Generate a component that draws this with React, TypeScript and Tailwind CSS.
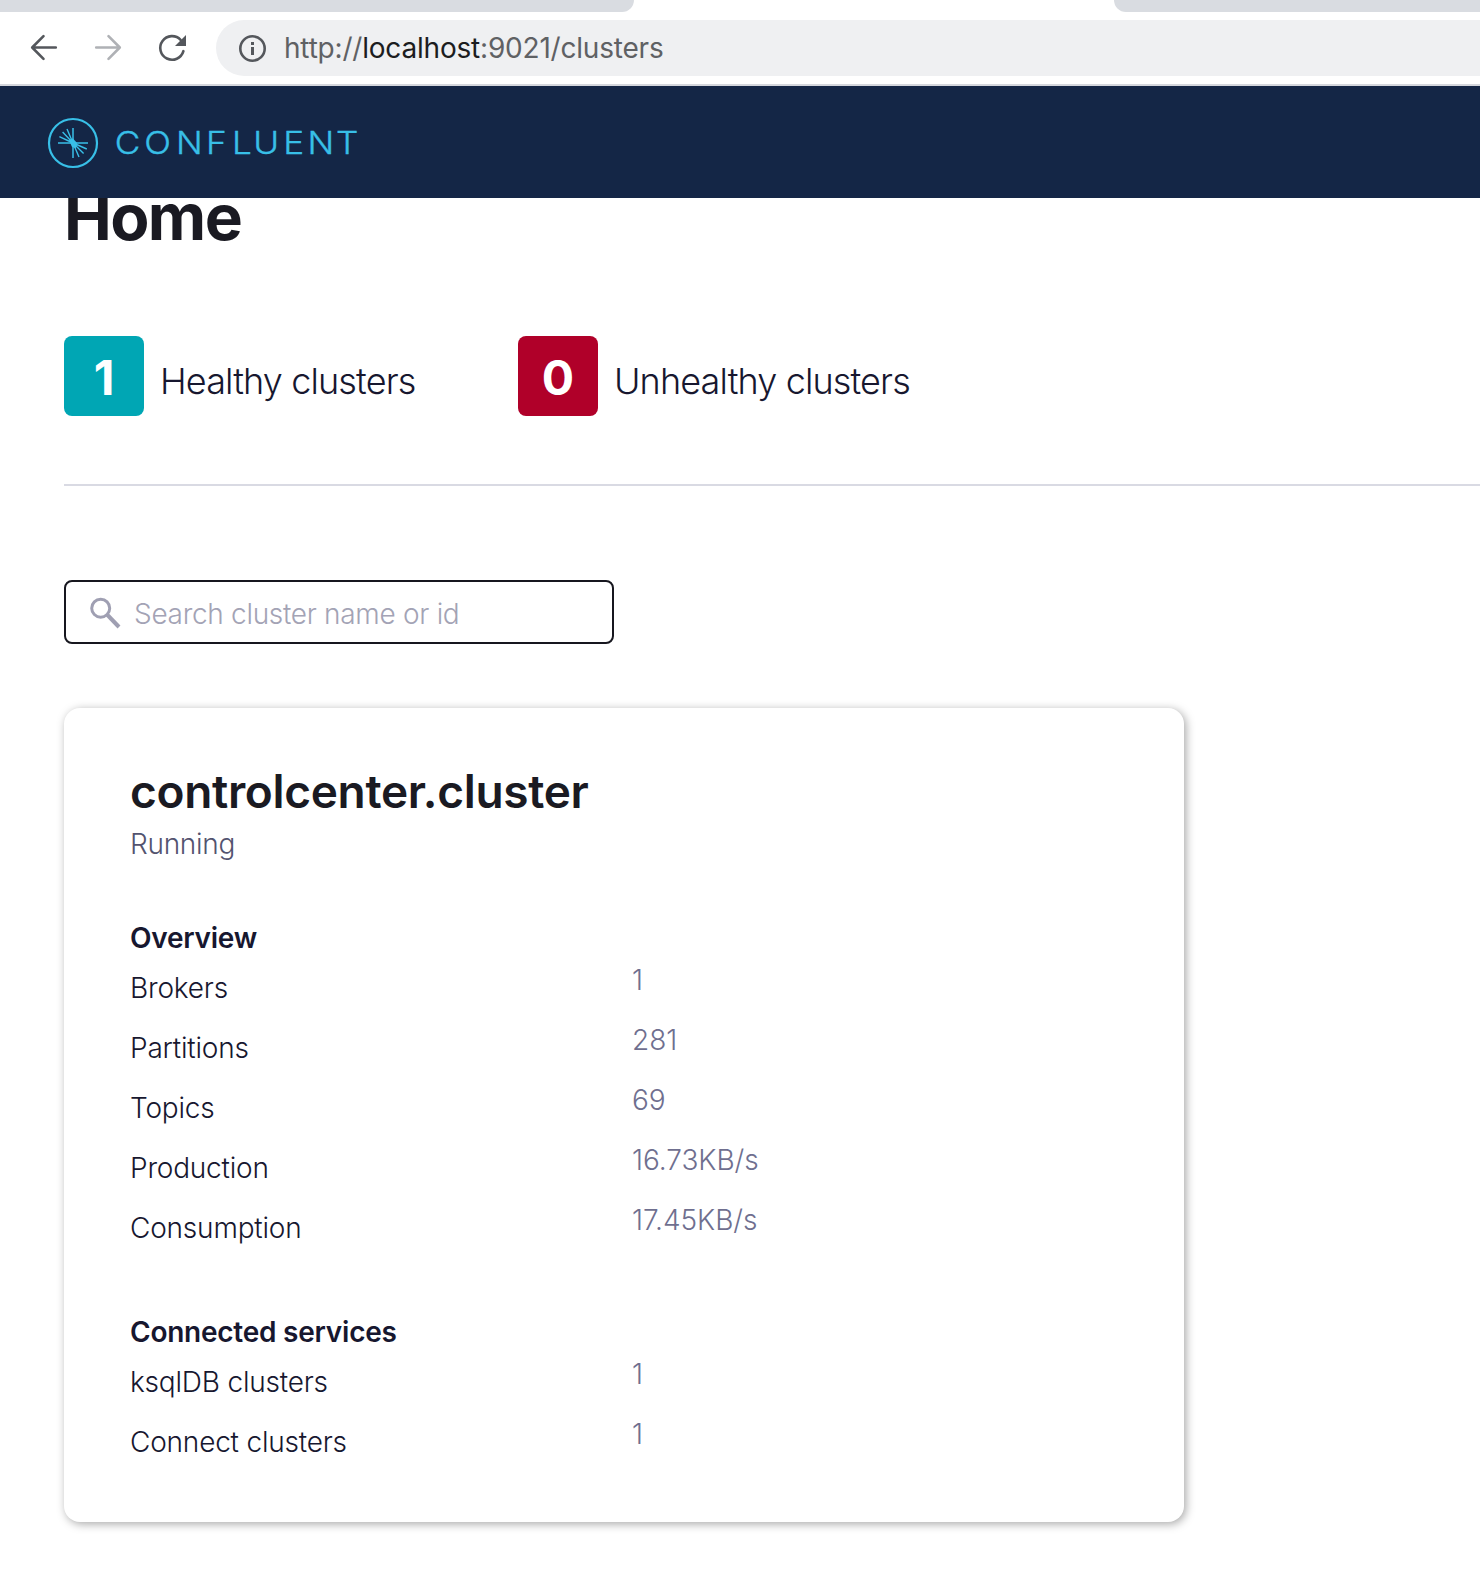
type Row = { label: string; value: string };

const overview: Row[] = [
  { label: "Brokers", value: "1" },
  { label: "Partitions", value: "281" },
  { label: "Topics", value: "69" },
  { label: "Production", value: "16.73KB/s" },
  { label: "Consumption", value: "17.45KB/s" },
];

const services: Row[] = [
  { label: "ksqlDB clusters", value: "1" },
  { label: "Connect clusters", value: "1" },
];

function BrowserBar() {
  return (
    <div className="flex h-[86px] flex-col border-b-2 border-[#d5d7dd] bg-white">
      <div className="flex h-3 justify-between">
        <div className="h-3 w-[634px] rounded-br-[16px] bg-[#d9dce1]" />
        <div className="h-3 w-[366px] rounded-bl-[16px] bg-[#d9dce1]" />
      </div>
      <div className="mt-2 flex h-14 items-center">
        <div className="flex w-[216px] shrink-0 items-center">
          <svg className="ml-6 h-10 w-10" viewBox="0 0 40 40" fill="none" stroke="#54575c" strokeWidth="2.6" strokeLinecap="round" strokeLinejoin="round">
            <path d="M31.8 19.5H8.6M19.5 8.2L8.2 19.5l11.3 11.3" />
          </svg>
          <svg className="ml-6 h-10 w-10" viewBox="0 0 40 40" fill="none" stroke="#afb1b5" strokeWidth="2.6" strokeLinecap="round" strokeLinejoin="round">
            <path d="M8.2 19.5h23.2M20.5 8.2l11.3 11.3-11.3 11.3" />
          </svg>
          <svg className="ml-6 h-10 w-10" viewBox="0 0 40 40" fill="none">
            <path d="M31.4 23.2A11.8 11.8 0 1 1 28.6 11.8" stroke="#54575c" strokeWidth="2.6" strokeLinecap="round" />
            <path d="M34 7v11H23z" fill="#54575c" />
          </svg>
        </div>
        <div className="flex h-14 flex-1 items-center rounded-l-full bg-[#eff0f2]">
          <svg className="ml-[22px] h-7 w-7" viewBox="0 0 28 28" fill="none">
            <circle cx="14.5" cy="14.5" r="12.2" stroke="#54575c" strokeWidth="2.6" />
            <path d="M14.5 8v3M14.5 13v8" stroke="#54575c" strokeWidth="3" />
          </svg>
          <span className="ml-[18px] text-[28px] leading-[56px] tracking-[-0.2px] text-[#5f6164]">
            http://<span className="text-[#1c1d1f]">localhost</span>:9021/clusters
          </span>
        </div>
      </div>
    </div>
  );
}

function Logo() {
  return (
    <svg className="h-[52px] w-[320px]" viewBox="0 0 320 52" fill="none" stroke="#38bfe7">
      <circle cx="26" cy="26" r="24" strokeWidth="2.2" />
      <path d="M26 11v30M11 26h30" strokeWidth="1.5" />
      <path
        d="M26 26L20 12M26 26l-10.4-11M26 26L12.4 19.6M26 26l6 14M26 26l10.6 10.6M26 26l13.8 6"
        strokeWidth="1.4"
      />
      <path d="M22 23l4-1.5 4 4.5-1 5-4-1z" fill="#38bfe7" stroke="none" />
      <text
        x="59.6 85.6 113.7 140.2 163.1 181.7 208.1 229.6 254.7"
        y="37.4"
        transform="scale(1.135 1)"
        fill="#38bfe7"
        strokeWidth="0.35"
        className="text-[31px] font-light"
      >
        CONFLUENT
      </text>
    </svg>
  );
}

function Badge({ count, label, tone }: { count: string; label: string; tone: string }) {
  return (
    <div className="flex h-20 gap-4">
      <div className={`h-20 w-20 rounded-lg text-center text-[48px] leading-[83px] font-bold text-white ${tone}`}>
        {count}
      </div>
      <span className="text-[36px] leading-[91px] font-light tracking-[-0.87px] whitespace-nowrap text-[#17172f]">{label}</span>
    </div>
  );
}

function Section({ title, rows }: { title: string; rows: Row[] }) {
  return (
    <section>
      <h3 className="h-[50px] text-[28px] leading-10 font-semibold tracking-[-0.24px] text-[#17172f]">{title}</h3>
      {rows.map((row) => (
        <div key={row.label} className="flex h-[60px] text-[28px] leading-10 font-light">
          <span className="w-[502px] tracking-[-0.2px] text-[#17172f]">{row.label}</span>
          <span className="-mt-2 tracking-[-0.05px] text-[#6f6f8f]">{row.value}</span>
        </div>
      ))}
    </section>
  );
}

export default function App() {
  return (
    <div className="h-[1586px] w-[1480px] overflow-hidden bg-white font-['Inter',sans-serif]">
      <BrowserBar />
      <header className="relative z-10 flex h-28 items-center bg-[#142646] pt-0.5 pl-[47px]">
        <Logo />
      </header>
      <main className="-mt-[21px] pl-16">
        <h1 className="text-[64px] leading-[80px] font-bold tracking-[-1.6px] text-[#1a1a22]">Home</h1>
        <div className="mt-[79px] flex">
          <div className="w-[454px]">
            <Badge count="1" label="Healthy clusters" tone="bg-[#00a6b4]" />
          </div>
          <Badge count="0" label="Unhealthy clusters" tone="bg-[#b00029]" />
        </div>
        <div className="mt-[68px] h-0.5 bg-[#d9dae3]" />
        <div className="mt-[94px] flex h-16 w-[550px] items-center rounded-lg border-2 border-[#17171f] pl-6">
          <svg className="mt-0.5 h-8 w-8 shrink-0" viewBox="0 0 32 32" fill="none" stroke="#9f9fb2">
            <circle cx="10.7" cy="11.2" r="9" strokeWidth="3" />
            <path d="M17 17.5L29 30" strokeWidth="4" />
          </svg>
          <input
            className="ml-3 h-12 flex-1 bg-transparent pt-1 text-[28px] font-light tracking-[-0.3px] outline-none placeholder:text-[#a3a3b5]"
            placeholder="Search cluster name or id"
          />
        </div>
        <article className="mt-16 h-[814px] w-[1120px] rounded-2xl bg-white pt-[53px] pl-[66px] shadow-[2px_2px_10px_rgba(0,0,0,0.35)]">
          <h2 className="text-[46px] leading-[60px] font-semibold tracking-[-0.32px] text-[#1a1a22]">controlcenter.cluster</h2>
          <p className="mt-[3px] text-[28px] leading-10 font-light tracking-[-0.3px] text-[#53536f]">Running</p>
          <div className="mt-[54px] flex flex-col gap-11">
            <Section title="Overview" rows={overview} />
            <Section title="Connected services" rows={services} />
          </div>
        </article>
      </main>
    </div>
  );
}
